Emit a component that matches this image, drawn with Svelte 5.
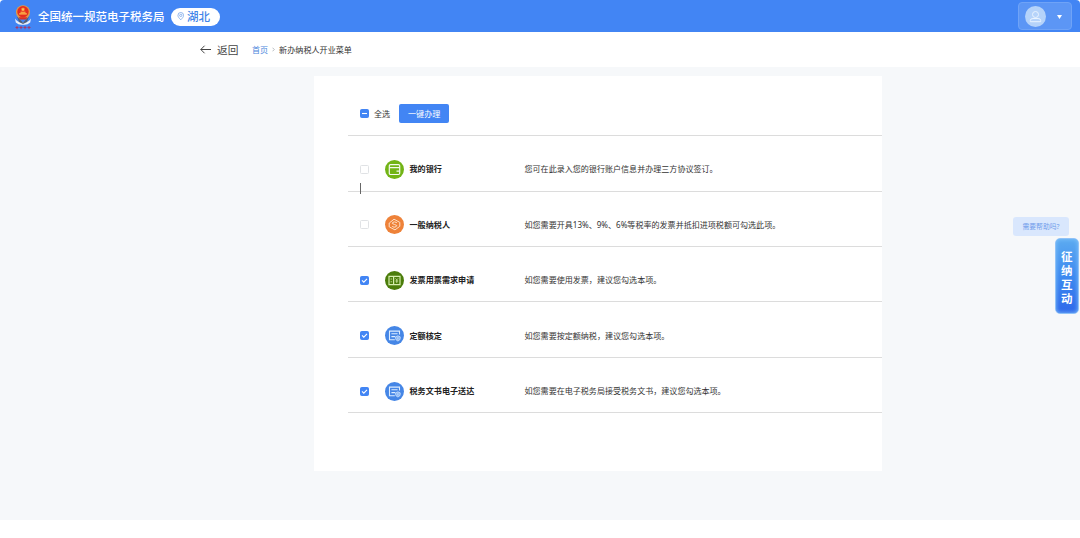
<script lang="ts">
	type Item = { id: string; name: string; desc: string; icon: 'card' | 'coin' | 'invoice' | 'form'; color: string; checked: boolean };

	let items: Item[] = $state([
		{ id: 'bank', name: '我的银行', desc: '您可在此录入您的银行账户信息并办理三方协议签订。', icon: 'card', color: '#72b416', checked: false },
		{ id: 'general', name: '一般纳税人', desc: '如您需要开具13%、9%、6%等税率的发票并抵扣进项税额可勾选此项。', icon: 'coin', color: '#ee8239', checked: false },
		{ id: 'invoice', name: '发票用票需求申请', desc: '如您需要使用发票，建议您勾选本项。', icon: 'invoice', color: '#4b7d0b', checked: true },
		{ id: 'quota', name: '定额核定', desc: '如您需要按定额纳税，建议您勾选本项。', icon: 'form', color: '#4586e6', checked: true },
		{ id: 'delivery', name: '税务文书电子送达', desc: '如您需要在电子税务局接受税务文书，建议您勾选本项。', icon: 'form', color: '#4586e6', checked: true }
	]);

	let allChecked = $derived(items.every((i) => i.checked));
	let someChecked = $derived(items.some((i) => i.checked));

	function toggleAll() {
		const next = !allChecked;
		items.forEach((i) => (i.checked = next));
	}
</script>

<div class="page">
	<header class="topbar">
		<svg class="emblem" viewBox="0 0 18 26">
			<path d="M1 14.5Q4 19 9 18.5Q14 19 17 14.5L16.2 18.5Q13 21.5 9 20.7Q5 21.5 1.8 18.5Z" fill="#e9f0fb" />
			<path d="M3 12.5L9 18.8L15 12.5L13 18L9 20L5 18Z" fill="#526078" />
			<circle cx="9" cy="8.2" r="7" fill="#e39a45" />
			<circle cx="9" cy="7.8" r="5.7" fill="#e52d20" />
			<path d="M9 3.3l.7 1.3 1.5.2-1.1 1 .3 1.5L9 6.6l-1.4.7.3-1.5-1.1-1 1.5-.2zM5.2 9.2h7.6v1.3H5.2zM6.5 7.8h5v.9h-5z" fill="#ffc34e" />
			<path d="M4.5 13.2h9l-1.5 2.2H6z" fill="#d93127" />
			<path d="M1.5 23.5h3M5.5 23.5h3M9.5 23.5h3M13.5 23.5h3M3 22v3.2M7 22v3.2M11 22v3.2M15 22v3.2" stroke="#a63a6c" stroke-width="1" />
		</svg>
		<h1>全国统一规范电子税务局</h1>
		<button class="region">
			<svg viewBox="0 0 8 9" fill="none" stroke="#6f9fe8" stroke-width=".8"><path d="M4 8.3C2.4 6.6 1 5.2 1 3.5a3 3 0 0 1 6 0C7 5.2 5.6 6.6 4 8.3z" /><circle cx="4" cy="3.6" r="1.2" /></svg>
			湖北
		</button>
		<button class="user" aria-label="用户">
			<svg class="avatar" viewBox="0 0 21 21"><circle cx="10.5" cy="10.5" r="10.5" fill="#b5d3fa" /><circle cx="10.5" cy="8.5" r="3" fill="none" stroke="#e9f3ff" /><path d="M5.3 15.7v-1.2q0-2 2.7-2h5q2.7 0 2.7 2v1.2z" fill="none" stroke="#e9f3ff" /></svg>
			<svg class="caret" viewBox="0 0 5 4"><path d="M0 0h5L2.5 4z" fill="#fff" /></svg>
		</button>
	</header>

	<nav class="crumbs">
		<button class="back">
			<svg viewBox="0 0 11 9" fill="none" stroke="#444" stroke-width="1"><path d="M11 4.5H.8M4.6.7L.8 4.5l3.8 3.8" /></svg>
			返回
		</button>
		<span class="home">首页</span>
		<svg class="sep" viewBox="0 0 3 5" fill="none" stroke="#9aa0a8" stroke-width=".7"><path d="M.5.7l1.8 1.8L.5 4.3" /></svg>
		<span>新办纳税人开业菜单</span>
	</nav>

	<main>
		<section class="panel">
			<div class="toolbar">
				<button class="check" class:on={someChecked} aria-label="全选" onclick={toggleAll}>
					<svg viewBox="0 0 9 9" fill="none" stroke="#fff" stroke-width="1.1"><path d={allChecked ? 'M2 4.5l1.8 1.8L7 2.8' : 'M2 4.5h5'} /></svg>
				</button>
				<span class="all">全选</span>
				<button class="submit">一键办理</button>
			</div>
			{#each items as item (item.id)}
				<div class="row">
					<button class="check" class:on={item.checked} aria-label={item.name} onclick={() => (item.checked = !item.checked)}>
						{#if item.checked}<svg viewBox="0 0 9 9" fill="none" stroke="#fff" stroke-width="1.1"><path d="M2 4.3l1.8 1.8L7 2.9" /></svg>{/if}
					</button>
					<svg class="icon" viewBox="0 0 19 19" fill="none" stroke="#f4faee" stroke-width="1.2">
						<circle cx="9.5" cy="9.5" r="9.5" fill={item.color} stroke="none" />
						{#if item.icon === 'card'}
							<rect x="4.3" y="4.6" width="10.4" height="9.9" rx="1.2" />
							<path d="M4.4 7.7h10.3M14.7 11.1h-3.2" />
						{:else if item.icon === 'coin'}
							<g stroke="#ffe0c6" stroke-width="1">
								<path d="M4.3 8L9 4.2l5.7 3.1M14.7 11.4L10 14.9l-5.7-3M4.2 8v3.9M14.8 7.3v4.1" />
								<path d="M11.9 7.7Q9.5 6.2 7.7 7.4T9.6 9.5T11.1 11.7T7.2 11.4" />
							</g>
						{:else if item.icon === 'invoice'}
							<path d="M4 5.3h11v8.4H4zM8.6 5.3v8.4" stroke="#d5edac" />
							<path d="M5.6 8h1.5M5.6 10.8h1.5M10.5 7.4l1.3 1.4 1.3-1.4M11.8 8.8v3.2M10.4 10h2.8" stroke="#d5edac" stroke-width=".8" />
						{:else}
							<path d="M14.5 8.4V5.1H4.5v8.7h5.3M6.4 7.7h6.2M6.4 10.6h3.8" stroke="#dcecff" stroke-width="1.1" />
							<path d="M12.9 9.8l2.3 1v1.8q0 1.6-2.3 2.4q-2.3-.8-2.3-2.4v-1.8zM12.9 11.2v2.4" fill="#86b4f4" stroke="#dcecff" stroke-width=".7" />
						{/if}
					</svg>
					<strong>{item.name}</strong>
					<span class="desc">{item.desc}</span>
				</div>
			{/each}
			<i class="cursor"></i>
		</section>
	</main>

	<div class="help">需要帮助吗?</div>
	<button class="interact">征纳互动</button>
</div>

<style>
	:global(body) { margin: 0; background: #fff; }
	.page { position: relative; display: flex; flex-direction: column; width: 1080px; height: 538px; overflow: hidden; background: #fff; border-radius: 4px; font-family: "Noto Sans", "Noto Sans CJK SC", sans-serif; font-size: 8.1px; line-height: 12px; color: #333; }
	button { display: flex; align-items: center; padding: 0; border: 0; background: none; font: inherit; color: inherit; cursor: pointer; }
	svg { display: block; flex: none; }
	.topbar { flex: none; display: flex; align-items: center; box-sizing: border-box; height: 32px; padding: 0 8px 0 14px; background: #4285f4; color: #fff; }
	.emblem { width: 18px; height: 26px; margin-top: 1px; }
	h1 { margin: 1px 7px 0 6px; font-size: 11.5px; line-height: 18px; font-weight: 500; white-space: nowrap; }
	.region { box-sizing: border-box; width: 49px; height: 18px; margin: 1px 0 0 -1px; padding-left: 6px; gap: 3px; border-radius: 9px; background: #fff; color: #4285e8; font-size: 11.5px; line-height: 18px; font-weight: 500; white-space: nowrap; }
	.region svg { width: 7.5px; height: 8.5px; }
	.user { box-sizing: border-box; width: 54px; height: 28px; margin-left: auto; padding-left: 6px; border: 1px solid #6fa3f7; border-radius: 4px; background: #5c96f5; }
	.avatar { width: 21px; height: 21px; }
	.caret { width: 5px; height: 4px; margin: 1px 0 0 11px; }
	.crumbs { flex: none; display: flex; align-items: center; box-sizing: border-box; height: 35px; padding-left: 200px; }
	.back { gap: 6px; margin-right: 13.5px; font-size: 10.7px; line-height: 16px; color: #444; }
	.back svg { width: 11px; height: 9px; }
	.home { color: #4b86dc; }
	.sep { width: 3px; height: 5px; margin: 0 4px; }
	main { flex: none; box-sizing: border-box; height: 453px; padding: 9px 0 0 314px; background: #f6f8fa; }
	.panel { position: relative; box-sizing: border-box; width: 568px; height: 395px; padding: 16px 0 0 34px; background: #fff; }
	.toolbar { display: flex; align-items: center; box-sizing: border-box; height: 44.3px; padding-left: 12px; border-bottom: 1px solid #dcdcdc; }
	.check { flex: none; justify-content: center; box-sizing: border-box; width: 9px; height: 9px; border: 1px solid #e0e2e5; border-radius: 1.5px; background: #fff; }
	.check.on { border-color: #4285f4; background: #4285f4; }
	.check svg { width: 9px; height: 9px; }
	.all { margin: 0 9px 0 5px; }
	.submit { justify-content: center; width: 50px; height: 19px; border-radius: 2px; background: #4285f4; color: #fff; }
	.row { display: flex; align-items: center; box-sizing: border-box; height: 55.4px; padding: 12px 0 0 12px; border-bottom: 1px solid #dcdcdc; white-space: nowrap; }
	.icon { width: 19px; height: 19px; margin: 0 5.5px 0 16px; }
	strong { width: 115px; font-weight: 700; color: #222; }
	.desc { font-size: 8.06px; }
	.cursor { position: absolute; left: 46px; top: 107px; width: 1px; height: 11px; background: #666; }
	.help { position: absolute; left: 1013px; top: 217px; width: 56px; height: 19px; border-radius: 3px; background: #d9e7fd; color: #719deb; font-size: 6.8px; line-height: 19px; text-align: center; }
	.interact { position: absolute; left: 1055px; top: 238px; box-sizing: border-box; width: 24px; height: 76px; padding: 3px 7px 0 5px; border: 1px solid #8fc2f8; border-radius: 5px; background: linear-gradient(#5caaf0, #3d8af0 50%, #2e68ea); box-shadow: inset 0 0 4px #83c4fa; color: #fff; font-size: 11.5px; line-height: 14px; font-weight: 700; word-break: break-all; }
</style>
